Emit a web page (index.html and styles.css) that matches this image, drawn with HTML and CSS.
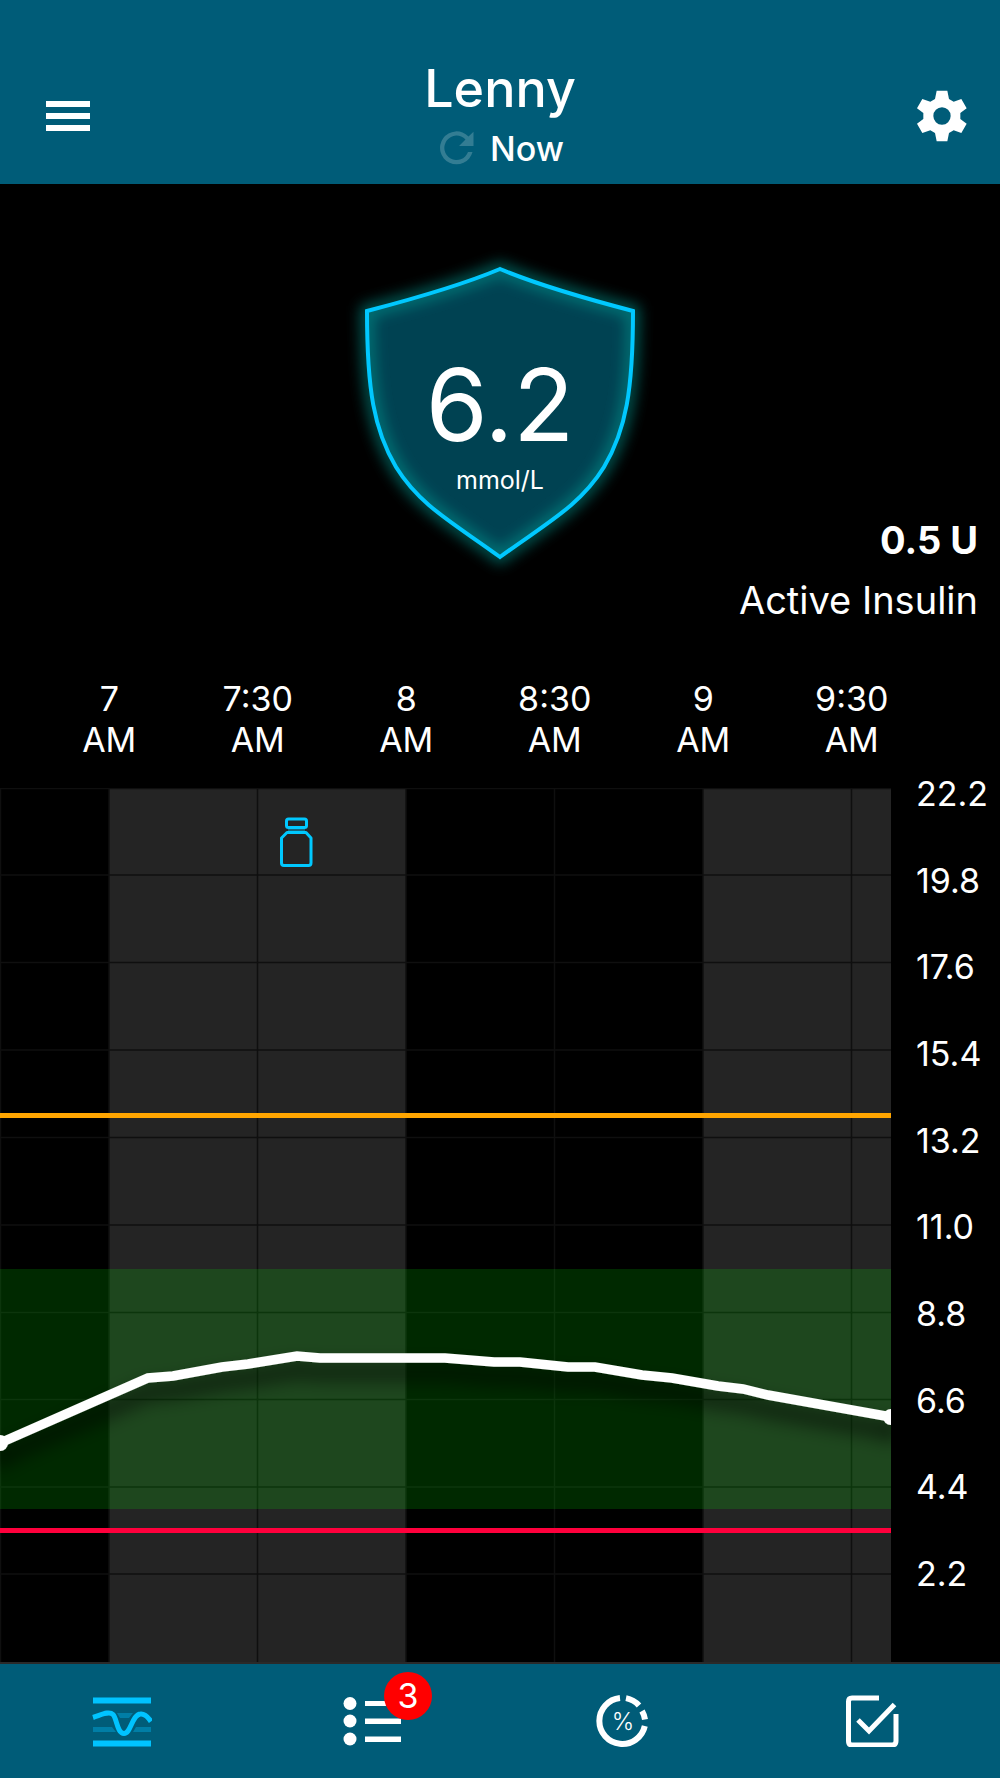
FILE: index.html
```html
<!DOCTYPE html>
<html lang="en">
<head>
    <meta charset="UTF-8">
    <meta name="viewport" content="width=device-width, initial-scale=1.0">
    <title>Lenny</title>
    <link rel="stylesheet" href="styles.css">
</head>
<body>
    <header class="header">
        <button class="icon-btn" aria-label="Menu">
            <svg width="44" height="30" viewBox="0 0 44 30" fill="#fff"><path d="M0 0h44v6H0zM0 12h44v6H0zM0 24h44v6H0z"/></svg>
        </button>
        <div class="header-title">
            <h1>Lenny</h1>
            <div class="updated">
                <svg width="34" height="34" viewBox="0 0 34 34"><path d="M28.500 5.500A16.500 16.500 0 1 0 32.500 21h-4.500A12.200 12.200 0 1 1 25.500 8.500L19 15H33.500V.8z" fill="#337d93"/></svg>
                <span>Now</span>
            </div>
        </div>
        <button class="icon-btn" aria-label="Settings">
            <svg width="52" height="52" viewBox="48 31 156 156"><path fill="#fff" fill-rule="evenodd" d="M110 33H142L147 58L161 66L184 58L200 86L181 100V118L200 132L184 160L161 152L147 160L142 185H110L105 160L91 152L67 160L51 132L70 118V100L51 86L67 58L91 66L105 58ZM126 83A26 26 0 1 0 126 135A26 26 0 1 0 126 83Z"/></svg>
        </button>
    </header>

    <main>
        <section class="status">
            <div class="shield">
                <svg class="shield-bg" viewBox="0 0 320 340">
                    <defs>
                        <filter id="glow" x="-20%" y="-20%" width="140%" height="140%"><feGaussianBlur stdDeviation="7"/></filter>
                        <path id="outline" d="M160 29Q205 48 293 71C293 150 286 190 264 227C240 266 205 284 160 317C115 284 80 266 56 227C34 190 27 150 27 71Q115 48 160 29Z"/>
                    </defs>
                    <use href="#outline" fill="#004252"/>
                    <use href="#outline" fill="none" stroke="#00968f" stroke-opacity=".6" stroke-width="13" filter="url(#glow)"/>
                    <use href="#outline" fill="none" stroke="#00c8ff" stroke-width="4"/>
                </svg>
                <span class="reading">6.2</span>
                <span class="unit">mmol/L</span>
            </div>
            <div class="insulin">
                <strong>0.5 U</strong>
                <span>Active Insulin</span>
            </div>
        </section>

        <section class="chart">
            <div class="x-axis">
                <span>7<br>AM</span>
                <span>7:30<br>AM</span>
                <span>8<br>AM</span>
                <span>8:30<br>AM</span>
                <span>9<br>AM</span>
                <span>9:30<br>AM</span>
            </div>
            <div class="plot-row">
                <svg class="plot" viewBox="0 0 891 874" preserveAspectRatio="none">
                    <defs>
                        <filter id="shadow" x="-5%" y="-50%" width="110%" height="250%"><feDropShadow dx="0" dy="14" stdDeviation="10" flood-color="#000" flood-opacity=".9"/></filter>
                    </defs>
                    <!-- alternating hours -->
                    <path d="M109 0H406V874H109zM703 0H891V874H703z" fill="#242424"/>
                    <!-- grid -->
                    <path d="M.5 0V874M109 0V874M257.500 0V874M406 0V874M554.500 0V874M703 0V874M851.500 0V874" stroke="#0f0f0f" stroke-width="1.500"/>
                    <path d="M0 .5H891M0 87H891M0 174.500H891M0 262H891M0 349.500H891M0 437H891M0 524.500H891M0 611.500H891M0 699H891M0 786H891" stroke="#0f0f0f" stroke-width="1.500" fill="none"/>
                    <!-- target range and alert limits -->
                    <rect x="0" y="481" width="891" height="240" fill="#0f0" fill-opacity=".16"/>
                    <path d="M0 327.500H891" stroke="#ffa500" stroke-width="5"/>
                    <path d="M0 742.500H891" stroke="#ff003c" stroke-width="5"/>
                    <!-- glucose -->
                    <g filter="url(#shadow)">
                        <polyline fill="none" stroke="#fff" stroke-width="9.500" points="0,655 148,590 173,588 222,579 248,576 297,568 320,570 445,570 494,574 520,574 568,579 595,579 642,587 672,590 718,598 743,601 768,607 891,629"/>
                        <circle cx="0" cy="655" r="8" fill="#fff"/>
                        <circle cx="891" cy="629" r="8" fill="#fff"/>
                    </g>
                    <!-- insulin vial -->
                    <g fill="none" stroke="#00c8ff" stroke-width="3" stroke-linejoin="round">
                        <rect x="286.500" y="31" width="20" height="8.500" rx="2"/>
                        <path d="M288 41.500H305" stroke-opacity=".4"/>
                        <path d="M287 44.500H306L311 50V75Q311 77.500 308.500 77.500H284Q281.500 77.500 281.500 75V50Z"/>
                    </g>
                </svg>
                <div class="y-axis">
                    <span>22.2</span>
                    <span>19.8</span>
                    <span>17.6</span>
                    <span>15.4</span>
                    <span>13.2</span>
                    <span>11.0</span>
                    <span>8.8</span>
                    <span>6.6</span>
                    <span>4.4</span>
                    <span>2.2</span>
                </div>
            </div>
        </section>
    </main>

    <nav class="tabs">
        <a href="#" class="tab" aria-label="Chart">
            <svg width="60" height="52" viewBox="0 0 60 52" fill="none">
                <path d="M25 18H41L37 23H28zM1 32H20L24 37H1zM44 32H59V37H41z" fill="#007ea6"/>
                <path d="M1 5.500H59M1 48.500H59" stroke="#00c3ff" stroke-width="6"/>
                <path d="M1 22.500C9 20 17 15.500 21 19.500C25 23.500 25 38.500 32 38.500C39 38.500 40 19.500 48.500 19C53 18.500 56 22 59 26.500" stroke="#00c3ff" stroke-width="5"/>
            </svg>
        </a>
        <a href="#" class="tab" aria-label="Notifications">
            <svg width="60" height="52" viewBox="0 0 60 52" fill="#fff">
                <circle cx="8" cy="8.500" r="6.500"/><circle cx="8" cy="26" r="6.500"/><circle cx="8" cy="44" r="6.500"/>
                <path d="M23 6H59V11H23zM23 23.500H59V29H23zM23 41.500H59V47H23z"/>
            </svg>
            <span class="badge">3</span>
        </a>
        <a href="#" class="tab" aria-label="Statistics">
            <svg width="60" height="52" viewBox="0 0 60 52">
                <g fill="none" stroke="#fff" stroke-width="6">
                    <path d="M28 3.100A23 23 0 1 0 52.800 31"/>
                    <path d="M34 3.100A23 23 0 0 1 47 10.500"/>
                    <path d="M50 16A23 23 0 0 1 53 24.500"/>
                </g>
                <text x="31" y="35" class="percent">%</text>
            </svg>
        </a>
        <a href="#" class="tab" aria-label="Tasks">
            <svg width="60" height="52" viewBox="0 0 60 52" fill="none" stroke="#fff" stroke-width="5">
                <path d="M37 3H10Q6.500 3 6.500 6.500V46Q6.500 50 10 50H50Q54 50 54 46V19"/>
                <path d="M16 25L27 36L52.500 9.500"/>
            </svg>
        </a>
    </nav>
</body>
</html>
```
FILE: styles.css
```css
* {
    box-sizing: border-box;
}

body {
    margin: 0;
    background-color: #000;
    color: #fff;
    font-family: Inter, "Liberation Sans", sans-serif;
}

.header {
    display: flex;
    justify-content: space-between;
    align-items: flex-start;
    height: 184px;
    padding: 56px 32px 0;
    background-color: #005c78;
}

.icon-btn {
    display: flex;
    justify-content: center;
    align-items: center;
    width: 72px;
    height: 60px;
    margin-top: 30px;
    padding: 0;
    border: none;
    background: none;
    cursor: pointer;
}

.icon-btn:last-child {
    justify-content: flex-end;
}

.header-title {
    text-align: center;
}

.header-title h1 {
    margin: 0;
    font-size: 52px;
    line-height: 66px;
    font-weight: 500;
}

.updated {
    display: flex;
    justify-content: center;
    align-items: center;
    gap: 16px;
    height: 52px;
    padding-left: 4px;
    font-size: 34px;
    font-weight: 500;
}

.status {
    display: grid;
    grid-template-columns: 1fr 320px 1fr;
    padding: 56px 22px 0;
}

.shield {
    grid-column: 2;
    position: relative;
    display: flex;
    flex-direction: column;
    align-items: center;
    height: 390px;
    padding-top: 105px;
}

.shield-bg {
    position: absolute;
    top: 0;
    left: 0;
    width: 320px;
    height: 340px;
    overflow: visible;
}

.reading {
    position: relative;
    font-size: 100px;
    line-height: 120px;
}

.unit {
    position: relative;
    font-size: 25px;
    line-height: 30px;
}

.insulin {
    align-self: end;
    text-align: right;
    font-size: 38px;
    line-height: 60px;
    white-space: nowrap;
}

.insulin strong,
.insulin span {
    display: block;
}

.x-axis {
    display: grid;
    grid-template-columns: repeat(6, 1fr);
    padding: 48px 74px 28px 35px;
    text-align: center;
    font-size: 34px;
    line-height: 41px;
}

.plot-row {
    display: flex;
}

.plot {
    flex: 1;
    min-width: 0;
    height: 874px;
}

.y-axis {
    display: flex;
    flex-direction: column;
    justify-content: space-between;
    width: 109px;
    padding: 6px 0 88px 25px;
    font-size: 34px;
    line-height: 0;
}

.tabs {
    display: grid;
    grid-template-columns: repeat(4, 1fr);
    height: 116px;
    border-top: 2px solid #2a2a2a;
    background-color: #005c78;
}

.tab {
    position: relative;
    display: flex;
    justify-content: center;
    align-items: center;
    padding-right: 7px;
    color: #fff;
    text-decoration: none;
}

.badge {
    position: absolute;
    top: 8px;
    left: 134px;
    width: 48px;
    height: 48px;
    border-radius: 50%;
    background-color: #f00;
    font-size: 34px;
    line-height: 48px;
    text-align: center;
}

.percent {
    fill: #fff;
    font-size: 24px;
    font-weight: 300;
    text-anchor: middle;
}
```
